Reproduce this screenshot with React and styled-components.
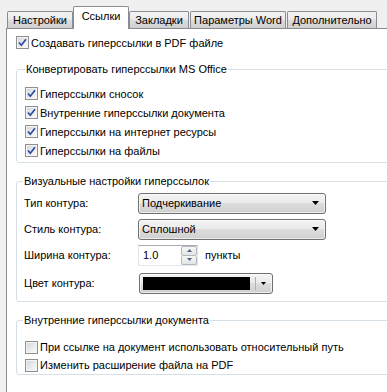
import React from "react";
import styled, { createGlobalStyle } from "styled-components";

const GlobalStyle = createGlobalStyle`
  html, body {
    margin: 0;
    padding: 0;
    background: #f0f0f0;
    overflow: hidden;
  }
  body {
    font-family: "Liberation Sans", Arial, sans-serif;
    font-size: 11px;
    color: #000;
  }
`;

const buttonGradient =
  "linear-gradient(#f3f3f3 0%, #ebebeb 45%, #dddddd 50%, #cfcfcf 100%)";

const Window = styled.div`
  width: 410px;
  height: 392px;
  display: flex;
  flex-direction: column;
`;

const TabStrip = styled.div`
  display: flex;
  align-items: flex-end;
  height: 28px;
  padding-left: 7px;
  box-sizing: border-box;
`;

const Tab = styled.div`
  box-sizing: border-box;
  width: ${(p) => p.$w}px;
  margin-left: ${(p) => p.$ml || 0}px;
  height: ${(p) => (p.$active ? 23 : 17)}px;
  margin-bottom: ${(p) => (p.$active ? -1 : 0)}px;
  padding-bottom: ${(p) => (p.$active ? 5 : 0)}px;
  border: 1px solid #898c95;
  border-bottom: none;
  border-radius: 2px 2px 0 0;
  background: ${(p) => (p.$active ? "#fff" : buttonGradient)};
  display: flex;
  align-items: center;
  justify-content: center;
  white-space: nowrap;
  position: relative;
  z-index: ${(p) => (p.$active ? 2 : 0)};
`;

const Panel = styled.div`
  flex: 1;
  margin-left: 6px;
  border-left: 1px solid #898c95;
  border-top: 1px solid #898c95;
  background: #fff;
  padding: 4px 8px 0 9px;
`;

const CheckRow = styled.label`
  display: flex;
  align-items: center;
  height: ${(p) => p.$h || 19}px;
  white-space: nowrap;
`;

const Box = styled.span`
  box-sizing: border-box;
  width: 13px;
  height: 13px;
  margin-right: 2px;
  border: 1px solid #8e8f8f;
  background: linear-gradient(135deg, #cfd2d6 0%, #eeeeee 60%, #fbfbfb 100%);
  box-shadow: inset 0 0 0 1px #f4f4f4;
  display: flex;
  flex: none;
`;

const Group = styled.fieldset`
  margin: ${(p) => p.$mt}px 0 0;
  border: 1px solid #d5dfe5;
  border-radius: 3px;
  padding: ${(p) => p.$pad};
  min-width: 0;
`;

const Legend = styled.legend`
  padding: 0 1px;
  margin-left: ${(p) => p.$lm || 0}px;
  line-height: 14px;
`;

const FieldRow = styled.div`
  display: grid;
  grid-template-columns: 114px auto;
  align-items: center;
  height: ${(p) => p.$h || 26}px;
  margin-top: ${(p) => p.$mt || 0}px;
`;

const Combo = styled.div`
  box-sizing: border-box;
  width: ${(p) => p.$w}px;
  height: 21px;
  margin-left: ${(p) => p.$ml || 0}px;
  border: 1px solid #707070;
  border-radius: 3px;
  background: ${buttonGradient};
  box-shadow: inset 0 0 0 1px rgba(255, 255, 255, 0.6);
  display: flex;
  align-items: center;
  justify-content: space-between;
  padding: 0 6px 0 3px;
`;

const SpinWrap = styled.div`
  display: flex;
  align-items: center;
  gap: 7px;
`;

const Spin = styled.div`
  box-sizing: border-box;
  width: 60px;
  height: 21px;
  border: 1px solid #e2e3ea;
  border-top-color: #abadb3;
  border-bottom-color: #e3e9ef;
  background: #fff;
  display: flex;
  align-items: center;
  justify-content: space-between;
  padding-left: 4px;
`;

const SpinButtons = styled.div`
  display: flex;
  flex-direction: column;
  width: 16px;
  height: 19px;
`;

const SpinButton = styled.div`
  box-sizing: border-box;
  flex: 1;
  border: 1px solid #b3b7bf;
  border-top-width: ${(p) => (p.$down ? 0 : 1)}px;
  border-radius: 2px;
  background: linear-gradient(#f7f7f7, #e4e4e4);
  display: flex;
  align-items: center;
  justify-content: center;
`;

const Swatch = styled.div`
  flex: 1;
  height: 13px;
  background: #000;
  margin-right: 5px;
`;

const Divider = styled.div`
  width: 1px;
  height: 13px;
  background: #b0b0b0;
  margin-right: 5px;
`;

const Check = ({ checked }) => (
  <Box>
    {checked && (
      <svg width="11" height="11" viewBox="0 0 11 11">
        <path
          d="M2 5.5 L4.3 8.2 L9 2.2"
          fill="none"
          stroke="#2b4aa3"
          strokeWidth="1.7"
        />
      </svg>
    )}
  </Box>
);

const Arrow = ({ small }) => (
  <svg width={small ? 5 : 7} height={small ? 3 : 4} viewBox="0 0 7 4">
    <path d="M0 0h7L3.5 4z" fill="#000" />
  </svg>
);

const SpinArrow = ({ up }) => (
  <svg width="5" height="3" viewBox="0 0 5 3">
    <path d={up ? "M0 3h5L2.5 0z" : "M0 0h5L2.5 3z"} fill="#4d6185" />
  </svg>
);

const tabs = [
  { label: "Настройки", w: 66 },
  { label: "Ссылки", w: 56, active: true },
  { label: "Закладки", w: 60 },
  { label: "Параметры Word", w: 96, ml: 1 },
  { label: "Дополнительно", w: 90, ml: 1 },
];

export default function App() {
  return (
    <Window>
      <GlobalStyle />
      <TabStrip>
        {tabs.map((t) => (
          <Tab key={t.label} $w={t.w} $ml={t.ml} $active={t.active}>
            {t.label}
          </Tab>
        ))}
      </TabStrip>
      <Panel>
        <CheckRow>
          <Check checked />
          Создавать гиперссылки в PDF файле
        </CheckRow>

        <Group $mt={10} $pad="8px 8px 2px">
          <Legend>Конвертировать гиперссылки MS Office</Legend>
          <CheckRow>
            <Check checked />
            Гиперссылки сносок
          </CheckRow>
          <CheckRow>
            <Check checked />
            Внутренние гиперссылки документа
          </CheckRow>
          <CheckRow>
            <Check checked />
            Гиперссылки на интернет ресурсы
          </CheckRow>
          <CheckRow>
            <Check checked />
            Гиперссылки на файлы
          </CheckRow>
        </Group>

        <Group $mt={11} $pad="2px 7px 5px">
          <Legend $lm={-1}>Визуальные настройки гиперссылок</Legend>
          <FieldRow>
            <span>Тип контура:</span>
            <Combo $w={188}>
              Подчеркивание
              <Arrow />
            </Combo>
          </FieldRow>
          <FieldRow>
            <span>Стиль контура:</span>
            <Combo $w={188}>
              Сплошной
              <Arrow />
            </Combo>
          </FieldRow>
          <FieldRow>
            <span>Ширина контура:</span>
            <SpinWrap>
              <Spin>
                1.0
                <SpinButtons>
                  <SpinButton>
                    <SpinArrow up />
                  </SpinButton>
                  <SpinButton $down>
                    <SpinArrow />
                  </SpinButton>
                </SpinButtons>
              </Spin>
              пункты
            </SpinWrap>
          </FieldRow>
          <FieldRow $mt={2}>
            <span>Цвет контура:</span>
            <Combo $w={134} $ml={1}>
              <Swatch />
              <Divider />
              <Arrow small />
            </Combo>
          </FieldRow>
        </Group>

        <Group $mt={11} $pad="11px 8px 0">
          <Legend $lm={-2}>Внутренние гиперссылки документа</Legend>
          <CheckRow $h={18}>
            <Check />
            При ссылке на документ использовать относительный путь
          </CheckRow>
          <CheckRow $h={18}>
            <Check />
            Изменить расширение файла на PDF
          </CheckRow>
        </Group>
      </Panel>
    </Window>
  );
}
